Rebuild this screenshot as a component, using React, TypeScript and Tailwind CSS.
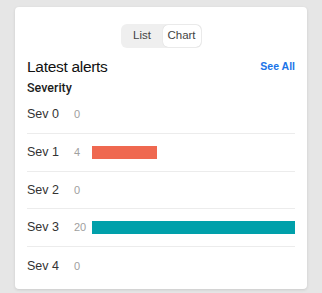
export default function App() {
  const rows = [
    { label: "Sev 0", count: 0, width: 0, color: "" },
    { label: "Sev 1", count: 4, width: 65, color: "bg-[#ef6850]" },
    { label: "Sev 2", count: 0, width: 0, color: "" },
    { label: "Sev 3", count: 20, width: 203, color: "bg-[#00a0aa]" },
    { label: "Sev 4", count: 0, width: 0, color: "" },
  ];

  return (
    <div
      className="h-[293px] w-[322px] bg-[#e6e6e6] pt-[7px] px-[15px]"
      style={{ fontFamily: "'Liberation Sans', Arial, sans-serif" }}
    >
      <div className="rounded-[4px] bg-white px-3 pt-[17px] pb-1 shadow-[0_1px_3px_rgba(0,0,0,0.12)]">
        <div className="flex justify-center">
          <div className="flex h-6 items-center rounded-[6px] bg-[#efefef] p-px text-[11.5px] text-[#444]">
            <button className="w-[41px] text-center">List</button>
            <button className="h-[22px] w-[38px] rounded-[5px] bg-white text-center shadow-[0_0_1px_rgba(0,0,0,0.2)]">
              Chart
            </button>
          </div>
        </div>

        <div className="mt-[9px] flex items-center justify-between">
          <h2 className="text-[15.5px] leading-5 tracking-[-0.3px] text-[#111]">Latest alerts</h2>
          <a className="text-[10.5px] font-semibold text-[#1a73e8]">See All</a>
        </div>
        <div className="mt-[1px] font-['Roboto',sans-serif] text-[12.5px] font-medium leading-5 text-[#1c1c1c]">
          Severity
        </div>

        <div className="-mt-[2px]">
          {rows.map((row, i) => (
            <div
              key={row.label}
              className={`flex h-[37.75px] items-center ${i < rows.length - 1 ? "border-b border-[#ececec]" : ""}`}
            >
              <span className="w-[47px] text-[12.5px] text-[#333]">{row.label}</span>
              <span className="w-[18px] text-[11px] text-[#a0a0a0]">{row.count}</span>
              {row.width > 0 && (
                <div className={`h-[13px] ${row.color}`} style={{ width: row.width }} />
              )}
            </div>
          ))}
        </div>
      </div>
    </div>
  );
}
